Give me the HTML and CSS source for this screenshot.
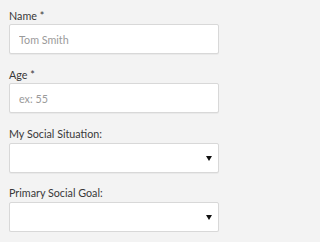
FILE: index.html
```html
<!DOCTYPE html>
<html>
<head>
<meta charset="utf-8">
<link rel="stylesheet" href="styles.css">
</head>
<body>
<form class="form">
  <div class="field">
    <label class="label">Name *</label>
    <input class="input" type="text" placeholder="Tom Smith">
  </div>
  <div class="field">
    <label class="label">Age *</label>
    <input class="input" type="text" placeholder="ex: 55">
  </div>
  <div class="field">
    <label class="label">My Social Situation:</label>
    <div class="select"><span class="arrow"></span></div>
  </div>
  <div class="field">
    <label class="label">Primary Social Goal:</label>
    <div class="select"><span class="arrow"></span></div>
  </div>
</form>
</body>
</html>
```
FILE: styles.css
```css
html, body {
  margin: 0;
  padding: 0;
  background: #f3f3f3;
}
body {
  font-family: Lato, "Open Sans", sans-serif;
  font-size: 10.75px;
  color: #444;
}
.form {
  padding: 7.5px 11px 0 9px;
  display: flex;
  flex-direction: column;
  gap: 12.83px;
}
.field {
  display: flex;
  flex-direction: column;
}
.label {
  display: block;
  line-height: 15px;
  margin-bottom: 1.5px;
  color: #383838;
}
.input, .select {
  box-sizing: border-box;
  height: 30px;
  width: 210px;
  margin: 0;
  border: 1px solid #d8d8d8;
  border-radius: 2px;
  background: #fff;
  box-shadow: 0 1px 0 rgba(0,0,0,0.04);
  font-family: Lato, "Open Sans", sans-serif;
  font-size: 10.75px;
  padding: 0 9px;
  outline: none;
}
.input::placeholder {
  color: #9a9a9a;
}
.select {
  display: flex;
  align-items: center;
  justify-content: flex-end;
  padding-right: 6px;
}
.arrow {
  width: 0;
  height: 0;
  border-left: 3px solid transparent;
  border-right: 3px solid transparent;
  border-top: 5px solid #111;
  margin-top: 1px;
}
```
